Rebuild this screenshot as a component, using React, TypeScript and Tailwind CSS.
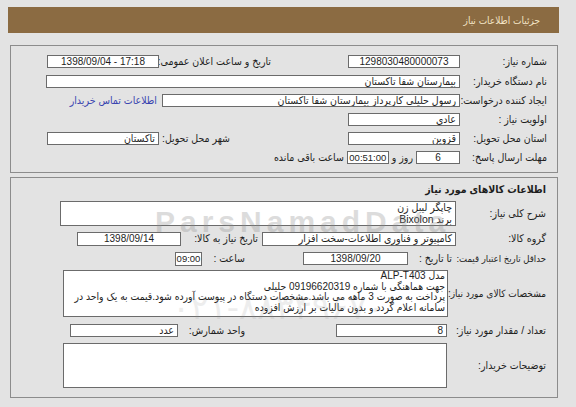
import React from "react";

const inputBase =
  "h-[13px] bg-white border border-[#6b6b6b] leading-[11px] px-[3px] overflow-hidden whitespace-nowrap shrink-0";
const num = "text-[10px] font-['Liberation_Sans','DejaVu_Sans_Condensed',sans-serif]";
const numSm = "text-[9.5px] font-['Liberation_Sans',sans-serif]";

function Row({ children, className = "" }: { children: React.ReactNode; className?: string }) {
  return <div className={`flex items-center whitespace-nowrap ${className}`}>{children}</div>;
}

export default function App() {
  return (
    <div
      dir="rtl"
      className="relative w-[576px] h-[407px] bg-[#e3e3e3] overflow-hidden pt-[7px] text-[10.5px] text-[#1e1e1e] font-['Liberation_Sans','DejaVu_Sans_Condensed',sans-serif]"
    >
      {/* header */}
      <div className="mr-[17px] ml-[8px] h-[26px] bg-[#8b6b42] flex items-center pr-[19px] text-[#f3e4c6] text-[10px]">
        جزئیات اطلاعات نیاز
      </div>

      {/* panel 1 */}
      <div className="mt-[12px] mr-[18px] ml-[10px] h-[128px] border border-[#8c8c8c] pr-[10px] pt-[6px]">
        <Row className="h-[19px]">
          <div className="w-[87px] shrink-0">شماره نیاز:</div>
          <div className={`${inputBase} ${num} w-[112px] text-center`} dir="ltr">1298030480000073</div>
          <div className="w-[77px] shrink-0" />
          <div className="w-[112px] shrink-0 text-left pl-[3px]">تاریخ و ساعت اعلان عمومی:</div>
          <div className={`${inputBase} ${num} w-[112px] text-center`} dir="ltr">1398/09/04 - 17:18</div>
        </Row>
        <Row className="h-[19px] mt-[1px]">
          <div className="w-[87px] shrink-0">نام دستگاه خریدار:</div>
          <div className={`${inputBase} w-[414px]`}>بیمارستان شفا تاکستان</div>
        </Row>
        <Row className="h-[19px]">
          <div className="w-[87px] shrink-0">ایجاد کننده درخواست:</div>
          <div className={`${inputBase} w-[298px]`}>رسول حلیلی کارپرداز بیمارستان شفا تاکستان</div>
          <div className="mr-[5px] text-[#3a45b0]">اطلاعات تماس خریدار</div>
        </Row>
        <Row className="h-[19px]">
          <div className="w-[87px] shrink-0">اولویت نیاز :</div>
          <div className={`${inputBase} w-[112px]`}>عادی</div>
        </Row>
        <Row className="h-[19px]">
          <div className="w-[87px] shrink-0">استان محل تحویل:</div>
          <div className={`${inputBase} w-[112px]`}>قزوین</div>
          <div className="w-[77px] shrink-0" />
          <div className="w-[112px] shrink-0 text-left pl-[3px]">شهر محل تحویل:</div>
          <div className={`${inputBase} w-[112px]`}>تاکستان</div>
        </Row>
        <Row className="h-[19px]">
          <div className="w-[87px] shrink-0">مهلت ارسال پاسخ:</div>
          <div className={`${inputBase} ${num} w-[44px] text-center`}>6</div>
          <div className="mx-[3px]">روز و</div>
          <div className={`h-[13px] bg-white border border-[#6b6b6b] leading-[11px] whitespace-nowrap shrink-0 ${numSm} w-[42px] text-center`} dir="ltr">00:51:00</div>
          <div className="mr-[3px]">ساعت باقی مانده</div>
        </Row>
      </div>

      {/* panel 2 */}
      <div className="mt-[4px] mr-[18px] ml-[10px] h-[221px] border border-[#8c8c8c] pr-[11px] pt-[2px]">
        <div className="h-[20px] flex items-center font-bold text-[10.5px]">اطلاعات کالاهای مورد نیاز</div>
        <Row className="mt-[1px]">
          <div className="w-[90px] shrink-0">شرح کلی نیاز:</div>
          <div className="w-[396px] h-[25px] bg-white border border-[#6b6b6b] px-[3px] leading-[11.5px] overflow-hidden">
            <div>چاپگر لیبل زن</div>
            <div>برند Bixolon</div>
          </div>
        </Row>
        <Row className="mt-[6px] h-[14px]">
          <div className="w-[90px] shrink-0">گروه کالا:</div>
          <div className={`${inputBase} w-[194px] h-[14px]`}>کامپیوتر و فناوری اطلاعات-سخت افزار</div>
          <div className="w-[81px] shrink-0 pr-[4px]">تاریخ نیاز به کالا:</div>
          <div className={`${inputBase} ${num} w-[104px] h-[14px] text-center`} dir="ltr">1398/09/14</div>
        </Row>
        <Row className="mt-[6px] h-[14px]">
          <div className="w-[91px] shrink-0 text-[9.5px]">حداقل تاریخ اعتبار قیمت:</div>
          <div className="w-[47px] shrink-0 pr-[3px]">تا تاریخ :</div>
          <div className={`${inputBase} ${num} w-[105px] h-[12px] text-center self-start`} dir="ltr">1398/09/20</div>
          <div className="w-[58px] shrink-0" />
          <div className="w-[43px] shrink-0">ساعت :</div>
          <div className={`h-[14px] bg-white border border-[#6b6b6b] leading-[12px] whitespace-nowrap shrink-0 ${numSm} w-[27px] text-center`} dir="ltr">09:00</div>
        </Row>
        <Row className="mt-[4px]">
          <div className="w-[98px] shrink-0 text-[10px]">مشخصات کالای مورد نیاز:</div>
          <div className="w-[385px] h-[47px] bg-white border border-[#6b6b6b] px-[2px] leading-[10.6px] text-[10.3px] overflow-hidden whitespace-nowrap">
            <div>مدل <span className="text-[10px]">ALP-T403</span></div>
            <div>جهت هماهنگی با شماره <span className="text-[10px]">09196620319</span> حلیلی</div>
            <div>پرداخت به صورت <span className="text-[10px]">3</span> ماهه می باشد.مشخصات دستگاه در پیوست آورده شود.قیمت به یک واحد در</div>
            <div>سامانه اعلام گردد و بدون مالیات بر ارزش افزوده</div>
          </div>
        </Row>
        <Row className="mt-[7px] h-[13px]">
          <div className="w-[99px] shrink-0">تعداد / مقدار مورد نیاز:</div>
          <div className={`${inputBase} ${num} w-[111px]`}>8</div>
          <div className="w-[91px] shrink-0" />
          <div className="w-[67px] shrink-0">واحد شمارش:</div>
          <div className={`${inputBase} w-[108px]`}>عدد</div>
        </Row>
        <Row className="mt-[6px]">
          <div className="w-[99px] shrink-0">توضیحات خریدار:</div>
          <div className="w-[384px] h-[45px] bg-white border border-[#6b6b6b]" />
        </Row>
      </div>

      {/* watermark overlay */}
      <div className="pointer-events-none absolute left-[155px] top-[207px] leading-none text-[30px] tracking-[5px] font-bold text-[#8f8f8f] opacity-30 font-['Liberation_Sans',sans-serif]" dir="ltr">
        ParsNamadData
      </div>
      <div className="pointer-events-none absolute left-[172px] top-[290px] leading-none text-[34px] tracking-[3px] text-[#8f8f8f] opacity-15 font-['DejaVu_Sans',sans-serif]" dir="ltr">
        ۰۲۱-۸۸۳۴۹۶۷۰
      </div>
    </div>
  );
}
